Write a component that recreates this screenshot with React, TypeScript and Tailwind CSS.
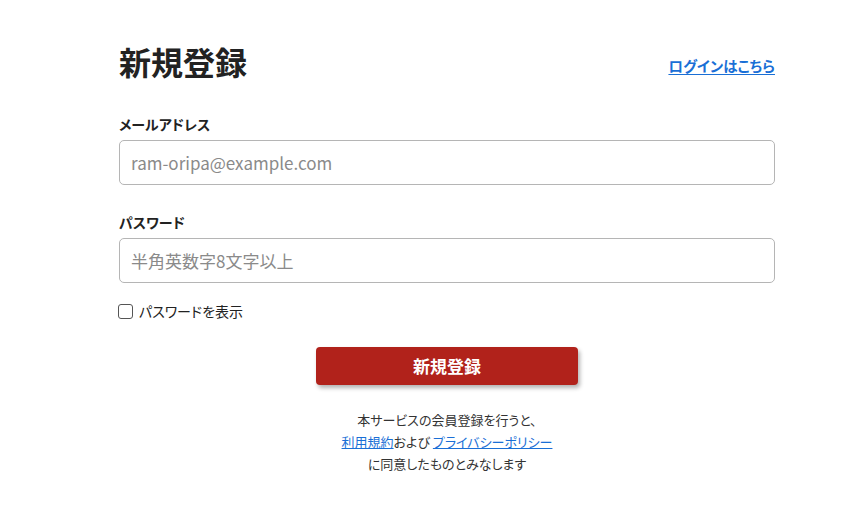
import React, { useState } from 'react';

const App = () => {
  const [showPassword, setShowPassword] = useState(false);

  return (
    <div className="min-h-screen bg-white text-[#222] font-['Noto_Sans_CJK_JP',sans-serif] [font-feature-settings:'palt']">
      <div className="ml-[119px] w-[656px] pt-[37px]">
        {/* Header */}
        <div className="flex items-end justify-between h-[48px]">
          <h1 className="text-[32px] leading-[48px] font-bold">新規登録</h1>
          <a href="#" className="text-[14.5px] leading-[30px] font-bold text-[#1a6fd6] underline underline-offset-2 mb-[4px]">
            ログインはこちら
          </a>
        </div>

        {/* Email */}
        <div className="mt-[27px]">
          <label className="block text-[14px] leading-[24px] font-bold mb-[4px]">メールアドレス</label>
          <input
            type="email"
            placeholder="ram-oripa@example.com"
            className="block w-full h-[45px] px-[11px] text-[17px] border border-[#b5b5b5] rounded-[5px] placeholder:text-[#8a8a8a] outline-none"
          />
        </div>

        {/* Password */}
        <div className="mt-[25px]">
          <label className="block text-[14px] leading-[24px] font-bold mb-[4px]">パスワード</label>
          <input
            type={showPassword ? 'text' : 'password'}
            placeholder="半角英数字8文字以上"
            className="block w-full h-[45px] px-[11px] text-[17px] border border-[#b5b5b5] rounded-[5px] placeholder:text-[#8a8a8a] outline-none"
          />
        </div>

        <label className="mt-[18px] flex items-center gap-[6px] h-[20px] text-[14px]">
          <input
            type="checkbox"
            checked={showPassword}
            onChange={(e) => setShowPassword(e.target.checked)}
            className="appearance-none w-[15px] h-[15px] border border-[#555] rounded-[3px] bg-white -ml-[1px]"
          />
          <span>パスワードを表示</span>
        </label>

        <div className="mt-[26px] flex justify-center">
          <button className="w-[262px] h-[38px] rounded-[4px] bg-[#b1221b] text-white text-[17px] font-bold shadow-[2px_3px_4px_rgba(0,0,0,0.3)]">
            新規登録
          </button>
        </div>

        <p className="mt-[24px] text-center text-[13px] leading-[22px] text-[#333]">
          本サービスの会員登録を行うと、
          <br />
          <a href="#" className="text-[#1a6fd6] underline">利用規約</a>および{' '}
          <a href="#" className="text-[#1a6fd6] underline">プライバシーポリシー</a>
          <br />
          に同意したものとみなします
        </p>
      </div>
    </div>
  );
};

export default App;
